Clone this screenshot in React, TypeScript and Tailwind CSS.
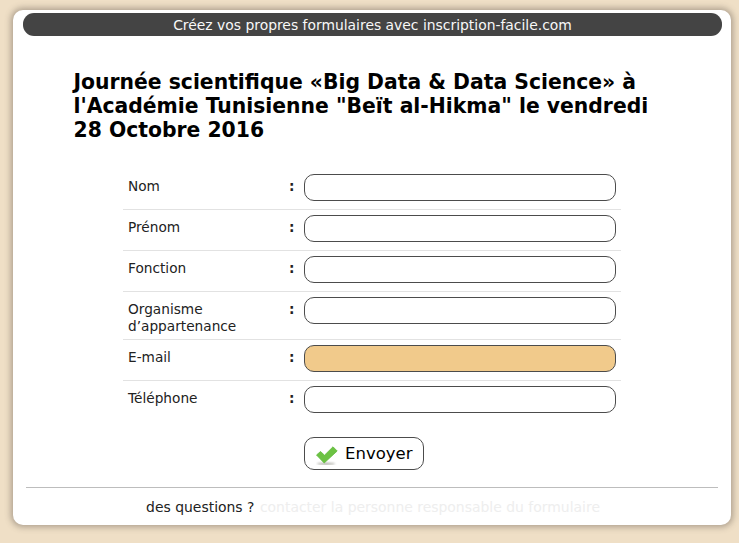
const rows: { label: string[]; h: string; filled?: boolean; last?: boolean }[] = [
  { label: ["Nom"], h: "h-[41px]" },
  { label: ["Prénom"], h: "h-[41px]" },
  { label: ["Fonction"], h: "h-[41px]" },
  { label: ["Organisme", "d’appartenance"], h: "h-[48px]" },
  { label: ["E-mail"], h: "h-[41px]", filled: true },
  { label: ["Téléphone"], h: "h-[41px]", last: true },
];

function Row({ r }: { r: (typeof rows)[number] }) {
  return (
    <div className={`flex pt-[5px] ${r.h} ${r.last ? "" : "border-b border-[#e2e2e2]"}`}>
      <div className="w-[160px] pl-[5px] pt-[4px] text-[13.7px] leading-[17px] text-[#222]">
        {r.label.map((l) => (
          <div key={l}>{l}</div>
        ))}
      </div>
      <div className="w-[21px] pl-[6px] pt-[4px] text-[13.7px] leading-[17px] font-bold text-[#222]">:</div>
      <div
        className={`h-[27px] w-[312px] rounded-[10px] border border-[#4c4c4c] ${
          r.filled ? "bg-[#f1ca8b]" : "bg-white"
        }`}
      />
    </div>
  );
}

export default function App() {
  return (
    <div
      className="flex h-[543px] w-[739px] overflow-hidden bg-[#efdfc6] pt-[10px] pl-[13px] text-black"
      style={{ fontFamily: '"DejaVu Sans", Verdana, sans-serif' }}
    >
      <div className="flex h-[515px] w-[718px] flex-col rounded-[10px] bg-white pt-[3px] shadow-[0_0_6px_2px_rgba(90,80,70,0.45)]">
        <div className="mx-[10px] flex h-[23px] w-[699px] items-center justify-center rounded-[11px] bg-[#444444] pt-[1px] text-[13.9px] text-[#f8f8f8]">
          Créez vos propres formulaires avec inscription-facile.com
        </div>
        <h1 className="mt-[34px] ml-[60.5px] w-[590px] text-[20.35px] leading-[24px] font-bold">
          Journée scientifique «Big Data &amp; Data Science» à l'Académie Tunisienne "Beït al-Hikma" le vendredi 28 Octobre 2016
        </h1>
        <div className="mt-[27px] ml-[110px] w-[498px]">
          {rows.map((r) => (
            <Row key={r.label[0]} r={r} />
          ))}
        </div>
        <div className="mt-[15px] ml-[291px]">
          <button className="flex h-[33px] w-[120px] items-center rounded-[10px] border border-[#4c4c4c] bg-white pl-[11px] text-[16.5px] text-black">
            <svg width="22" height="22" viewBox="0 0 22 22" className="mr-[7px]">
              <defs>
                <filter id="sh" x="-20%" y="-150%" width="140%" height="400%">
                  <feGaussianBlur stdDeviation="0.8" />
                </filter>
              </defs>
              <ellipse cx="10" cy="20.8" rx="9" ry="1.1" fill="#a8a8a0" filter="url(#sh)" />
              <path d="M0.5 12 L4.5 8.5 L8.5 12.2 L17 3.8 L21.2 8 L8.2 20 Z" fill="#6cc243" stroke="#62ba3c" strokeWidth="0.8" strokeLinejoin="round" />
            </svg>
            <span className="pt-[2px]">Envoyer</span>
          </button>
        </div>
        <div className="mt-[17px] mx-[13px] border-t border-[#bdbdbd]" />
        <div className="mt-[10px] pl-[2px] text-center text-[13.95px] leading-[18px] text-[#222]">
          <span className="mr-[1px]">des questions ?</span> <span className="text-[#eeeeee]">contacter la personne responsable du formulaire</span>
        </div>
      </div>
    </div>
  );
}
